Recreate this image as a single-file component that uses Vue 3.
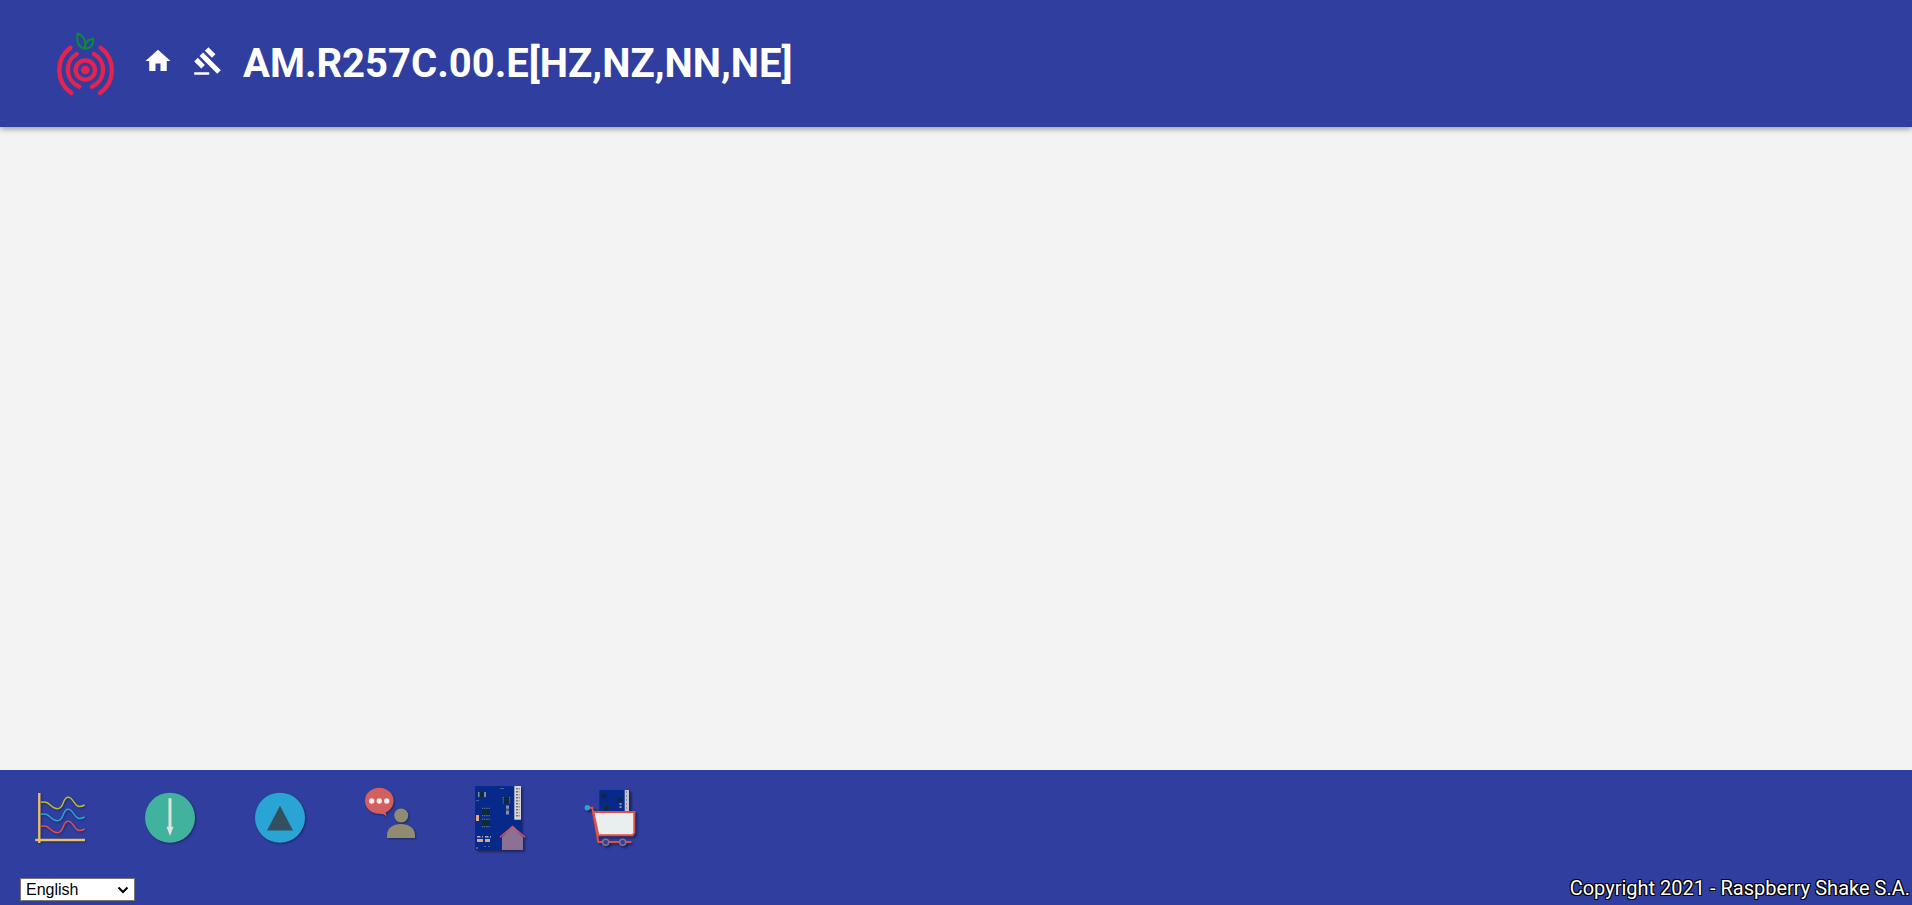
<script setup>
import { ref } from 'vue'

const language = ref('English')
const languages = ['English', 'Español', 'Français', 'Deutsch']
const station = 'AM.R257C.00.E[HZ,NZ,NN,NE]'
const waves = [
  { color: '#b5bd35', y: 0 },
  { color: '#29a4d4', y: 12 },
  { color: '#d9534f', y: 24 },
]
const pins = [2, 5, 8, 11, 14, 17, 20, 23, 26, 29]
</script>

<template>
  <div class="page">
    <header class="top">
      <a class="logo" href="#" aria-label="Raspberry Shake">
        <svg viewBox="39 30 192 204" fill="none" stroke-linecap="round">
          <g stroke="#e6234c" stroke-width="13">
            <circle cx="136" cy="150" r="13" fill="#e6234c" stroke="none" />
            <circle cx="136" cy="150" r="29" />
            <path d="M110 102A55 55 0 0 0 118 200" />
            <path d="M162 102A55 55 0 0 1 156 200" />
            <path d="M91 83A84 84 0 0 0 94 219" />
            <path d="M182 83A84 84 0 0 1 180 219" />
          </g>
          <g stroke="#0c8a3c" stroke-width="6" stroke-linejoin="round">
            <path d="M135 86C116 82 109 65 113 40C130 48 141 62 135 86Z" />
            <path d="M135 86C133 68 144 57 160 56C161 74 153 86 135 86Z" />
          </g>
        </svg>
      </a>
      <nav class="tools">
        <a href="#" aria-label="Home">
          <svg viewBox="0 0 24 24"><path d="M10 20v-6h4v6h5v-8h3L12 3 2 12h3v8z" /></svg>
        </a>
        <a href="#" aria-label="License">
          <svg viewBox="0 0 24 24">
            <path d="M1 21h12v2H1zM5.245 8.07l2.83-2.827 14.14 14.142-2.828 2.828zM12.317 1l5.657 5.656-2.83 2.83-5.654-5.66zM3.825 9.485l5.657 5.657-2.828 2.828-5.657-5.657z" />
          </svg>
        </a>
      </nav>
      <h1>{{ station }}</h1>
    </header>

    <main></main>

    <footer>
      <nav class="apps">
        <a href="#" aria-label="Helicorder">
          <svg viewBox="0 0 64 64" fill="none">
            <path d="M11.3 7v50M7.3 54H57" stroke="#e9c06a" stroke-width="2.4" />
            <path
              v-for="w in waves" :key="w.y" :stroke="w.color" stroke-width="1.5"
              :transform="`translate(0 ${w.y})`"
              d="M13 16.3C22 14 22 22.7 29.3 22.7S34 11.3 40.3 11.3S46 25 56.7 19"
            />
          </svg>
        </a>
        <a href="#" aria-label="Download">
          <svg viewBox="0 0 64 64">
            <circle cx="32" cy="31.7" r="25" fill="#41b29e" />
            <path d="M30.5 12.3h3v28.4h2L32 50l-3.500-9.300h2z" fill="#dfe3dc" />
          </svg>
        </a>
        <a href="#" aria-label="Station view">
          <svg viewBox="0 0 64 64">
            <circle cx="32" cy="31.7" r="25" fill="#29a4d4" />
            <path d="M32 19.700 45 44.500H19z" fill="#344f60" />
          </svg>
        </a>
        <a href="#" aria-label="Community">
          <svg viewBox="0 0 64 64">
            <ellipse cx="21.3" cy="14.700" rx="14.300" ry="13" fill="#d45f60" />
            <path d="M21 27.500Q26 27.500 28.700 30.500L27 24z" fill="#d45f60" />
            <g fill="#f1eeee">
              <circle cx="13.7" cy="15" r="2.7" />
              <circle cx="21.3" cy="15" r="2.7" />
              <circle cx="28.7" cy="15" r="2.7" />
            </g>
            <circle cx="43.200" cy="29.500" r="7" fill="#918c71" />
            <path d="M29 52v-2.500C29 42 35 38 43 38s14 4 14 11.500V52z" fill="#918c71" />
          </svg>
        </a>
        <a href="#" aria-label="My Shake">
          <svg class="deep" viewBox="0 0 64 64">
            <path d="M7 0h46v64H7z" fill="#07298a" />
            <path d="M46.300 0H53v33.700h-6.700z" fill="#d3d6dc" />
            <g v-for="(p, i) in pins" :key="p">
              <rect x="48" :y="p" width="2" height="1.500" :fill="i % 2 ? '#5f7a68' : '#777b86'" />
              <rect x="50.500" :y="p" width="1.500" height="1.500" :fill="i % 3 ? '#e0a070' : '#d8737a'" />
            </g>
            <path d="M10 6h8v5h-8z" fill="#7c88a5" />
            <path
              d="M35.500 11v7M41.500 11v7M14 22.500h8M14 29.500h8M14 33.500h8M14 40.500h8"
              fill="none" stroke="#60719f" stroke-width="1.400" stroke-dasharray="1.200 1"
            />
            <path d="M11.500 6H16v5h-4.500zM36 11h5v7h-5zM14 23h8v6h-8zM14 34h8v6h-8z" fill="#112b36" />
            <path d="M38 19.500h3v9h-3z" fill="#8390ad" />
            <path d="M38 22.500h3v2.500h-3z" fill="#4b5681" />
            <path d="M8 29h3v6H8zM9 53h6v2H9zM17 53h5v2h-5z" fill="#e4a984" />
            <path d="M9 50h6v1.500H9zM17 50h6v1.500h-6zM9 55h6v1H9zM17 55h5v1h-5zM8 29h3v1H8z" fill="#a9b0c6" />
            <path d="M12.500 50H14v1.500h-1.500zM20.500 50H22v1.500h-1.500z" fill="#101b3d" />
            <path d="M32 2h4v1h-4zM8 14h3v1H8zM16 60h2v1h-2zM20 60h2v1h-2zM8 61h2v2H8z" fill="#4461a5" />
            <path d="M44.500 41 55 51v13H34V51z" fill="#8d7195" />
            <path d="M32 51.300 44.500 40.500 57 51.300" fill="none" stroke="#d95753" stroke-width="1.500" />
          </svg>
        </a>
        <a href="#" aria-label="Shop">
          <svg class="deep" viewBox="0 0 64 64">
            <path d="M21.300 4H52v22H21.300z" fill="#07298a" />
            <path d="M46.700 4H51v22h-4.300z" fill="#bfc3cf" />
            <path d="M48.500 5v20" stroke="#8b8998" stroke-dasharray="2 2" />
            <path d="M24 8h4v4h-4zM39 12h5v4h-5zM26 20h5v4h-5z" fill="#112b36" />
            <path d="M42.500 17v6" stroke="#8791b4" stroke-width="2" stroke-dasharray="2 1" />
            <path d="M15.300 26H56.300V47L54.500 49.300H20.300z" fill="#e9eeee" stroke="#de5047" stroke-width="2" />
            <path d="M9.300 21.700h5l6 34.300h33" fill="none" stroke="#de5047" stroke-width="2" />
            <circle cx="9.300" cy="21.700" r="2.700" fill="#29a4d4" />
            <g fill="#303f9f" stroke="#85738e" stroke-width="1.500">
              <circle cx="27.700" cy="56.300" r="3" />
              <circle cx="44.700" cy="56.300" r="3" />
            </g>
          </svg>
        </a>
      </nav>
      <div class="bottom">
        <div class="language">
          <select v-model="language" aria-label="Language">
            <option v-for="l in languages" :key="l">{{ l }}</option>
          </select>
          <svg viewBox="0 0 12 8" aria-hidden="true">
            <path d="M1.500 1.500 6 6 10.500 1.500" fill="none" stroke="#000" stroke-width="2" />
          </svg>
        </div>
        <span class="copyright">Copyright 2021 - Raspberry Shake S.A.</span>
      </div>
    </footer>
  </div>
</template>

<style>
body {
  background: #f3f3f3;
}
</style>

<style scoped>
.page {
  display: flex;
  flex-direction: column;
  min-height: 100vh;
  font-family: Roboto, "Liberation Sans", sans-serif;
  color: #fff;
}
.top {
  display: flex;
  align-items: flex-start;
  box-sizing: border-box;
  min-height: 127px;
  padding: 30px 53px 29px;
  background: #303f9f;
  box-shadow: 0 2px 5px rgba(0, 0, 0, 0.26), 0 2px 8px rgba(0, 0, 0, 0.12);
}
svg {
  display: block;
}
.logo svg {
  width: 64px;
  height: 68px;
}
.tools {
  display: flex;
  gap: 20px;
  padding: 16px 20px 0 26px;
}
.tools svg {
  width: 30px;
  height: 30px;
  fill: #fff;
}
h1 {
  margin: 10px 0 0;
  font-size: 40px;
  line-height: 48px;
  font-weight: 700;
}
main {
  flex: 1;
}
footer {
  background: #303f9f;
}
.apps {
  display: flex;
  gap: 46px;
  padding: 16px 28px 28px;
}
.apps svg {
  width: 64px;
  height: 64px;
  overflow: visible;
  filter: drop-shadow(1px 1px 1px rgba(0, 0, 0, 0.4));
}
.apps .deep {
  filter: drop-shadow(2px 2px 1px rgba(0, 0, 0, 0.4));
}
.bottom {
  display: flex;
  align-items: flex-start;
  justify-content: space-between;
  padding: 0 2px 4px 20px;
}
.language {
  position: relative;
}
.language svg {
  position: absolute;
  top: 8px;
  right: 6px;
  width: 12px;
  height: 8px;
  pointer-events: none;
}
select {
  display: block;
  appearance: none;
  width: 115px;
  height: 23px;
  padding: 0 20px 0 5px;
  font: 16px "Liberation Sans", Arial, sans-serif;
  color: #000;
  background: #fff;
  border: 1px solid #767676;
  border-radius: 0;
}
.copyright {
  font-size: 20px;
  line-height: 20px;
  text-shadow: 1px 1px 0 #000, -1px -1px 0 #000, 1px -1px 0 #000, -1px 1px 0 #000;
}
</style>
